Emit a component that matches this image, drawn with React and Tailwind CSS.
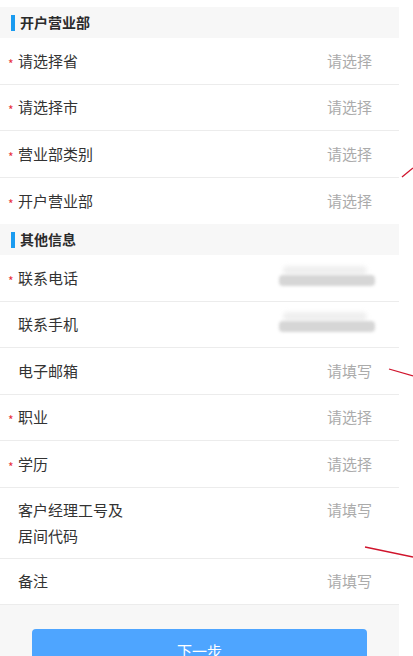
import React from 'react';

const sectionOne = [
  { label: '请选择省', required: true, value: '请选择' },
  { label: '请选择市', required: true, value: '请选择' },
  { label: '营业部类别', required: true, value: '请选择' },
  { label: '开户营业部', required: true, value: '请选择', last: true },
];

const sectionTwo = [
  { label: '联系电话', required: true, blurred: true },
  { label: '联系手机', required: false, blurred: true },
  { label: '电子邮箱', required: false, value: '请填写' },
  { label: '职业', required: true, value: '请选择' },
  { label: '学历', required: true, value: '请选择' },
  { label: ['客户经理工号及', '居间代码'], required: false, value: '请填写' },
  { label: '备注', required: false, value: '请填写' },
];

const SectionHeader = ({ title }) => (
  <div className="flex h-[31px] items-center bg-[#f7f7f7] pl-[11px]">
    <span className="mr-[5px] h-4 w-1 bg-[#1a9bf0]"></span>
    <span className="text-[14px] font-bold text-[#2b2b2b]">{title}</span>
  </div>
);

const Blurred = () => (
  <div className="relative mr-[-3px] h-[24px] w-[96px]">
    <div className="absolute left-1 right-2 top-0 h-[9px] rounded-full bg-[#efefef] blur-[2px]"></div>
    <div className="absolute left-0 right-0 top-[9px] h-[11px] rounded-sm bg-[#d6d6d6] blur-[1.5px]"></div>
  </div>
);

const Row = ({ item }) => {
  const multi = Array.isArray(item.label);
  return (
    <div
      className={`flex justify-between pl-2 pr-[27px] ${
        multi ? 'items-start py-[9px]' : 'h-[46.5px] items-center'
      } ${item.last ? '' : 'border-b border-[#ececec]'}`}
    >
      <div className="flex items-start">
        <span className="flex h-[26px] w-[10px] items-center text-[12px] leading-none text-[#e8323c]">
          <span className="translate-y-[3px]">{item.required ? '*' : ''}</span>
        </span>
        <div className="text-[15px] leading-[26px] text-[#333]">
          {multi ? item.label.map((l) => <div key={l}>{l}</div>) : item.label}
        </div>
      </div>
      {item.blurred ? (
        <Blurred />
      ) : (
        <span className="text-[15px] leading-[26px] text-[#ababab]">{item.value}</span>
      )}
    </div>
  );
};

const App = () => {
  return (
    <div
      className="relative h-[656px] w-[413px] overflow-hidden bg-white"
      style={{ fontFamily: '"Noto Sans CJK SC", "Noto Sans", sans-serif' }}
    >
      <div className="w-[399px] pt-[7px]">
        <SectionHeader title="开户营业部" />
        {sectionOne.map((item) => (
          <Row key={item.label} item={item} />
        ))}
        <SectionHeader title="其他信息" />
        {sectionTwo.map((item) => (
          <Row key={Array.isArray(item.label) ? item.label[0] : item.label} item={item} />
        ))}
        <div className="bg-[#f7f7f7] px-8 pt-6 pb-6">
          <button className="h-[44px] w-full rounded-sm bg-[#4ea5ff] text-[15px] text-white">下一步</button>
        </div>
      </div>
      <svg className="pointer-events-none absolute left-0 top-0" width="413" height="656">
        <line x1="402" y1="177" x2="413" y2="168" stroke="#d0142c" strokeWidth="1.3" />
        <line x1="389" y1="369" x2="413" y2="376" stroke="#d0142c" strokeWidth="1.3" />
        <line x1="365" y1="547" x2="413" y2="557" stroke="#d0142c" strokeWidth="1.3" />
      </svg>
    </div>
  );
};

export default App;
